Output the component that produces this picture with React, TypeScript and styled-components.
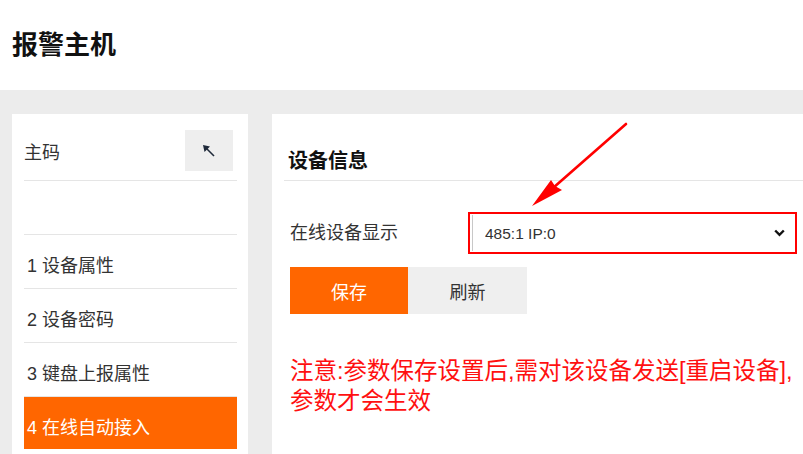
import React from "react";
import styled, { createGlobalStyle } from "styled-components";

const GlobalStyle = createGlobalStyle`
  html, body {
    margin: 0;
    padding: 0;
    background: #ffffff;
    overflow: hidden;
  }
  body {
    font-family: "Liberation Sans", "Noto Sans CJK SC", sans-serif;
    color: #333333;
  }
  * { box-sizing: border-box; }
`;

const ACCENT = "#ff6600";
const LINE = "#e5e5e5";

const Page = styled.div`
  position: relative;
  width: 803px;
  height: 454px;
  display: flex;
  flex-direction: column;
  overflow: hidden;
`;

const Header = styled.header`
  height: 90px;
  flex: none;
  display: flex;
  align-items: center;
  padding: 0 0 0 12px;
  font-size: 26px;
  font-weight: 700;
  line-height: 30px;
  color: #111111;
`;

const Main = styled.main`
  flex: 1;
  display: flex;
  gap: 24px;
  background: #ececec;
  padding: 24px 0 0 12px;
  min-height: 0;
`;

const Sidebar = styled.nav`
  width: 236px;
  flex: none;
  background: #ffffff;
  padding: 0 11px 0 12px;
`;

const TopRow = styled.div`
  display: flex;
  align-items: center;
  justify-content: space-between;
  padding: 16px 4px 9px 0;
  border-bottom: 1px solid ${LINE};
  font-size: 18px;
  line-height: 24px;
  color: #333333;
`;

const TopLabel = styled.span`
  padding-top: 4px;
`;

const IconButton = styled.button`
  width: 48px;
  height: 41px;
  border: none;
  background: #eeeeee;
  display: flex;
  align-items: center;
  justify-content: center;
  padding: 0;
  cursor: pointer;
`;

const MenuItem = styled.div<{ $active?: boolean }>`
  height: ${(p) => (p.$active ? "52px" : "54px")};
  display: flex;
  align-items: center;
  padding: 9px 0 0 3px;
  font-size: 18px;
  line-height: 24px;
  color: ${(p) => (p.$active ? "#ffffff" : "#333333")};
  background: ${(p) => (p.$active ? ACCENT : "transparent")};
  border-bottom: ${(p) => (p.$active ? "none" : `1px solid ${LINE}`)};
`;

const Content = styled.section`
  flex: 1;
  background: #ffffff;
  padding: 0 0 0 12px;
  min-width: 0;
`;

const SectionTitle = styled.h2`
  margin: 0;
  height: 67px;
  display: flex;
  align-items: flex-end;
  padding: 0 0 7px 4px;
  border-bottom: 1px solid ${LINE};
  font-size: 20px;
  font-weight: 700;
  line-height: 24px;
  color: #111111;
`;

const FieldRow = styled.div`
  display: flex;
  align-items: center;
  margin-top: 31px;
  padding-left: 6px;
`;

const FieldLabel = styled.label`
  width: 178px;
  flex: none;
  font-size: 18px;
  line-height: 24px;
  color: #333333;
`;

const SelectFrame = styled.div`
  position: relative;
  width: 329px;
  height: 42px;
  border: 2px solid #ff0000;
  padding: 1px 0 1px 2px;
  display: flex;
`;

const SelectBox = styled.select`
  flex: 1;
  appearance: none;
  -webkit-appearance: none;
  border: none;
  border-left: 1px solid #c8c8c8;
  background: #ffffff;
  font-family: "Liberation Sans", "Noto Sans CJK SC", sans-serif;
  font-size: 15.5px;
  color: #333333;
  padding: 0 0 0 12px;
  outline: none;
`;

const Chevron = styled.svg`
  position: absolute;
  right: 10px;
  top: 50%;
  transform: translateY(-50%);
  pointer-events: none;
`;

const ButtonRow = styled.div`
  display: flex;
  margin-top: 13px;
  padding-left: 6px;
`;

const ActionButton = styled.button<{ $primary?: boolean }>`
  width: ${(p) => (p.$primary ? "118px" : "119px")};
  height: 47px;
  border: none;
  padding: 0;
  font-family: "Liberation Sans", "Noto Sans CJK SC", sans-serif;
  font-size: 18px;
  color: ${(p) => (p.$primary ? "#ffffff" : "#333333")};
  background: ${(p) => (p.$primary ? ACCENT : "#efefef")};
  cursor: pointer;
`;

const Notice = styled.p`
  margin: 42px 0 0;
  padding-left: 6px;
  font-size: 23.5px;
  line-height: 30px;
  color: #ff1010;
  white-space: nowrap;
`;

const Pointer = styled.svg`
  position: absolute;
  left: 0;
  top: 0;
  pointer-events: none;
`;

const menu = ["", "1 设备属性", "2 设备密码", "3 键盘上报属性"];

export default function App() {
  return (
    <Page>
      <GlobalStyle />
      <Header>报警主机</Header>
      <Main>
        <Sidebar>
          <TopRow>
            <TopLabel>主码</TopLabel>
            <IconButton aria-label="返回">
              <svg width="14" height="14" viewBox="0 0 14 14">
                <line x1="12" y1="12" x2="4" y2="4" stroke="#1f2a3a" strokeWidth="1.6" />
                <polygon points="1,1 8,2.5 2.5,8" fill="#1f2a3a" />
              </svg>
            </IconButton>
          </TopRow>
          {menu.map((m, i) => (
            <MenuItem key={i}>{m}</MenuItem>
          ))}
          <MenuItem $active>4 在线自动接入</MenuItem>
        </Sidebar>
        <Content>
          <SectionTitle>设备信息</SectionTitle>
          <FieldRow>
            <FieldLabel>在线设备显示</FieldLabel>
            <SelectFrame>
              <SelectBox defaultValue="485:1 IP:0">
                <option>485:1 IP:0</option>
              </SelectBox>
              <Chevron width="11" height="8" viewBox="0 0 11 8">
                <polyline points="1.2,1.5 5.5,5.8 9.8,1.5" fill="none" stroke="#111" strokeWidth="2.4" />
              </Chevron>
            </SelectFrame>
          </FieldRow>
          <ButtonRow>
            <ActionButton $primary>保存</ActionButton>
            <ActionButton>刷新</ActionButton>
          </ButtonRow>
          <Notice>
            注意:参数保存设置后,需对该设备发送[重启设备],
            <br />
            参数才会生效
          </Notice>
        </Content>
      </Main>
      <Pointer width="803" height="454" viewBox="0 0 803 454">
        <line x1="626" y1="124" x2="553" y2="188" stroke="#ff0000" strokeWidth="2.6" strokeLinecap="round" />
        <polygon points="532,206 551,180 555,186 562,190" fill="#ff0000" />
      </Pointer>
    </Page>
  );
}
